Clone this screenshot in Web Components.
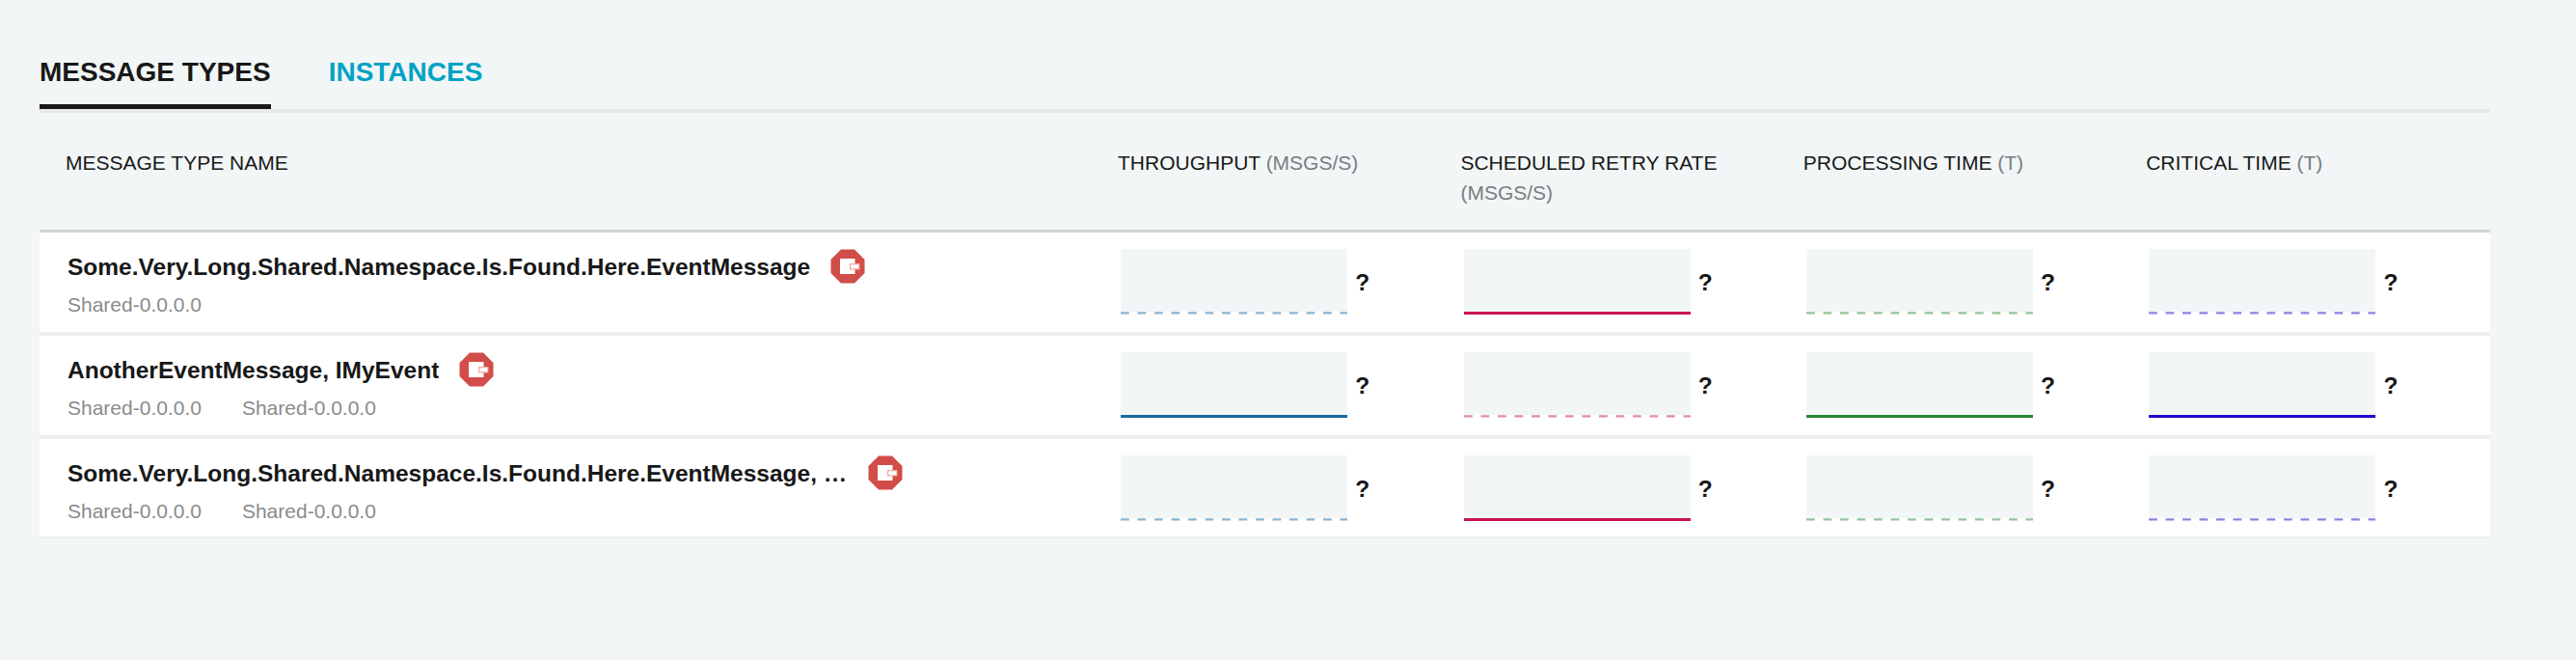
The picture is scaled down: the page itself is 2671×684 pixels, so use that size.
<!DOCTYPE html>
<html lang="en">
<head>
<meta charset="utf-8">
<title>Message types</title>
<style>
    html, body {
        margin: 0;
        padding: 0;
        background: #f2f6f7;
        font-family: "Liberation Sans", Arial, sans-serif;
        color: #181818;
    }
</style>
</head>
<body>
<mt-page>
    <mt-tabs slot="tabs">
        <mt-tab active>MESSAGE TYPES</mt-tab>
        <mt-tab>INSTANCES</mt-tab>
    </mt-tabs>
    <mt-header>
        <mt-heading>MESSAGE TYPE NAME</mt-heading>
        <mt-heading unit="(MSGS/S)">THROUGHPUT</mt-heading>
        <mt-heading unit="(MSGS/S)">SCHEDULED RETRY RATE</mt-heading>
        <mt-heading unit="(T)">PROCESSING TIME</mt-heading>
        <mt-heading unit="(T)">CRITICAL TIME</mt-heading>
    </mt-header>
    <mt-row name="Some.Very.Long.Shared.Namespace.Is.Found.Here.EventMessage">
        <mt-assembly>Shared-0.0.0.0</mt-assembly>
        <mt-metric slot="metrics" color="#1a6a9e" dashed></mt-metric>
        <mt-metric slot="metrics" color="#cc1452"></mt-metric>
        <mt-metric slot="metrics" color="#2a8535" dashed></mt-metric>
        <mt-metric slot="metrics" color="#2200cc" dashed></mt-metric>
    </mt-row>
    <mt-row name="AnotherEventMessage, IMyEvent">
        <mt-assembly>Shared-0.0.0.0</mt-assembly>
        <mt-assembly>Shared-0.0.0.0</mt-assembly>
        <mt-metric slot="metrics" color="#1a6a9e"></mt-metric>
        <mt-metric slot="metrics" color="#cc1452" dashed></mt-metric>
        <mt-metric slot="metrics" color="#2a8535"></mt-metric>
        <mt-metric slot="metrics" color="#2200cc"></mt-metric>
    </mt-row>
    <mt-row name="Some.Very.Long.Shared.Namespace.Is.Found.Here.EventMessage, IMyEvent, AnotherEventMessage">
        <mt-assembly>Shared-0.0.0.0</mt-assembly>
        <mt-assembly>Shared-0.0.0.0</mt-assembly>
        <mt-metric slot="metrics" color="#1a6a9e" dashed></mt-metric>
        <mt-metric slot="metrics" color="#cc1452"></mt-metric>
        <mt-metric slot="metrics" color="#2a8535" dashed></mt-metric>
        <mt-metric slot="metrics" color="#2200cc" dashed></mt-metric>
    </mt-row>
</mt-page>

<script>
const COLUMNS = '1118px repeat(4, 355.4px)';

class MtPage extends HTMLElement {
    constructor() {
        super();
        this.attachShadow({ mode: 'open' });
        this.shadowRoot.innerHTML = `
            <style>
                :host {
                    display: block;
                    box-sizing: border-box;
                    width: 2582px;
                    height: 684px;
                    padding: 48px 0 0 41px;
                }
            </style>
            <slot name="tabs"></slot>
            <slot></slot>
        `;
    }
}

class MtTabs extends HTMLElement {
    constructor() {
        super();
        this.attachShadow({ mode: 'open' });
        this.shadowRoot.innerHTML = `
            <style>
                :host {
                    display: flex;
                    gap: 60px;
                    height: 65px;
                    border-bottom: 4px solid #e8e9ea;
                }
            </style>
            <slot></slot>
        `;
    }
}

class MtTab extends HTMLElement {
    constructor() {
        super();
        this.attachShadow({ mode: 'open' });
        this.shadowRoot.innerHTML = `
            <style>
                :host {
                    display: block;
                    box-sizing: border-box;
                    height: 65px;
                    padding-top: 10px;
                    font-size: 28px;
                    line-height: 34px;
                    font-weight: 700;
                    color: #00a3c4;
                }
                :host([active]) {
                    color: #181818;
                    border-bottom: 5px solid #181818;
                }
            </style>
            <slot></slot>
        `;
    }
}

class MtHeader extends HTMLElement {
    constructor() {
        super();
        this.attachShadow({ mode: 'open' });
        this.shadowRoot.innerHTML = `
            <style>
                :host {
                    display: grid;
                    grid-template-columns: ${COLUMNS};
                    box-sizing: border-box;
                    height: 124px;
                    padding-top: 37px;
                    border-bottom: 3px solid #d2d8d8;
                    box-shadow: 0 1px 0 #e6eaea;
                }
                ::slotted(:first-child) {
                    padding-left: 27px;
                }
            </style>
            <slot></slot>
        `;
    }
}

class MtHeading extends HTMLElement {
    constructor() {
        super();
        this.attachShadow({ mode: 'open' });
        this.shadowRoot.innerHTML = `
            <style>
                :host {
                    display: block;
                    font-size: 21px;
                    line-height: 30.6px;
                    color: #181818;
                }
                span {
                    color: #777f7f;
                }
            </style>
            <slot></slot>
            <span></span>
        `;
    }

    connectedCallback() {
        this.shadowRoot.querySelector('span').textContent = this.getAttribute('unit') || '';
    }
}

class MtRow extends HTMLElement {
    constructor() {
        super();
        this.attachShadow({ mode: 'open' });
        this.shadowRoot.innerHTML = `
            <style>
                :host {
                    display: grid;
                    grid-template-columns: ${COLUMNS};
                    box-sizing: border-box;
                    height: 107px;
                    background: #fff;
                    border-bottom: 4px solid #eeeeee;
                }
                :host(:last-child) {
                    height: 103px;
                    border-bottom-width: 2px;
                }
                .name-cell {
                    min-width: 0;
                    padding: 18px 0 0 29px;
                }
                .title {
                    display: flex;
                    align-items: center;
                    gap: 21px;
                    height: 35px;
                }
                .name {
                    max-width: 809px;
                    overflow: hidden;
                    white-space: nowrap;
                    text-overflow: ellipsis;
                    font-size: 24.5px;
                    line-height: 35px;
                    font-weight: 700;
                    color: #181818;
                }
                mt-endpoint-icon {
                    margin-top: -2px;
                }
                .assemblies {
                    display: flex;
                    gap: 42px;
                    margin-top: 7px;
                }
                .metrics {
                    display: contents;
                }
            </style>
            <div class="name-cell">
                <div class="title">
                    <div class="name"></div>
                    <mt-endpoint-icon></mt-endpoint-icon>
                </div>
                <div class="assemblies"><slot></slot></div>
            </div>
            <div class="metrics"><slot name="metrics"></slot></div>
        `;
    }

    connectedCallback() {
        this.shadowRoot.querySelector('.name').textContent = this.getAttribute('name');
    }
}

class MtAssembly extends HTMLElement {
    constructor() {
        super();
        this.attachShadow({ mode: 'open' });
        this.shadowRoot.innerHTML = `
            <style>
                :host {
                    display: block;
                    font-size: 21px;
                    line-height: 30px;
                    color: #8b8b8b;
                }
            </style>
            <slot></slot>
        `;
    }
}

class MtEndpointIcon extends HTMLElement {
    constructor() {
        super();
        this.attachShadow({ mode: 'open' });
        this.shadowRoot.innerHTML = `
            <style>
                :host {
                    display: block;
                    flex: none;
                    width: 36px;
                    height: 36px;
                }
                svg {
                    display: block;
                }
            </style>
            <svg width="36" height="36" viewBox="0 0 36 36" aria-hidden="true">
                <path fill="#d14d49" d="M11 0.5H25L35.5 11V25L25 35.5H11L0.5 25V11Z"/>
                <rect x="10" y="10" width="15.5" height="16" fill="#fff"/>
                <rect x="20" y="15" width="10.5" height="6.5" fill="#f2a9a6"/>
                <rect x="21.3" y="16.3" width="8" height="4" fill="#fff"/>
            </svg>
        `;
    }
}

class MtMetric extends HTMLElement {
    constructor() {
        super();
        this.attachShadow({ mode: 'open' });
        this.shadowRoot.innerHTML = `
            <style>
                :host {
                    display: flex;
                    align-items: center;
                    gap: 8px;
                    padding: 17px 0 0 3.3px;
                    height: 68px;
                    font-size: 24.5px;
                    font-weight: 700;
                    color: #181818;
                }
                svg {
                    display: block;
                    flex: none;
                }
                .value {
                    position: relative;
                    top: 1px;
                }
            </style>
            <svg width="235" height="68" viewBox="0 0 235 68">
                <rect width="235" height="65" fill="#f2f6f7"/>
                <line x1="0" x2="235" y1="66.5" y2="66.5" stroke-width="3"/>
            </svg>
            <span class="value">?</span>
        `;
    }

    connectedCallback() {
        const line = this.shadowRoot.querySelector('line');
        line.setAttribute('stroke', this.getAttribute('color'));
        if (this.hasAttribute('dashed')) {
            line.setAttribute('y1', '66.4');
            line.setAttribute('y2', '66.4');
            line.setAttribute('stroke-width', '2.4');
            line.setAttribute('stroke-dasharray', '8.75 8.75');
            line.setAttribute('stroke-opacity', '0.5');
        }
    }
}

customElements.define('mt-page', MtPage);
customElements.define('mt-tabs', MtTabs);
customElements.define('mt-tab', MtTab);
customElements.define('mt-header', MtHeader);
customElements.define('mt-heading', MtHeading);
customElements.define('mt-row', MtRow);
customElements.define('mt-assembly', MtAssembly);
customElements.define('mt-endpoint-icon', MtEndpointIcon);
customElements.define('mt-metric', MtMetric);
</script>
</body>
</html>
